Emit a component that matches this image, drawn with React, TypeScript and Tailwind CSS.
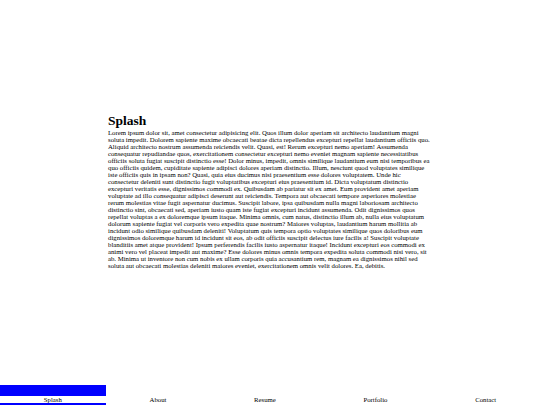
const TEXT =
  "Lorem ipsum dolor sit, amet consectetur adipisicing elit. Quos illum dolor aperiam sit architecto laudantium magni soluta impedit. Dolorem sapiente maxime obcaecati beatae dicta repellendus excepturi repellat laudantium officiis quo. Aliquid architecto nostrum assumenda reiciendis velit. Quasi, est! Rerum excepturi nemo aperiam! Assumenda consequatur repudiandae quos, exercitationem consectetur excepturi nemo eveniet magnam sapiente necessitatibus officiis soluta fugiat suscipit distinctio esse! Dolor minus, impedit, omnis similique laudantium eum nisi temporibus ea quo officiis quidem, cupiditate sapiente adipisci dolores aperiam distinctio. Illum, nesciunt quod voluptates similique iste officiis quis in ipsam non? Quasi, quia eius ducimus nisi praesentium esse dolores voluptatem. Unde hic consectetur deleniti sunt distinctio fugit voluptatibus excepturi eius praesentium id. Dicta voluptatum distinctio excepturi veritatis esse, dignissimos commodi ex. Quibusdam ab pariatur sit ex amet. Eum provident amet aperiam voluptate ad illo consequatur adipisci deserunt aut reiciendis. Tempora aut obcaecati tempore asperiores molestiae rerum molestias vitae fugit aspernatur ducimus. Suscipit labore, ipsa quibusdam nulla magni laboriosam architecto distinctio sint, obcaecati sed, aperiam iusto quam iste fugiat excepturi incidunt assumenda. Odit dignissimos quos repellat voluptas a ex doloremque ipsum itaque. Minima omnis, cum natus, distinctio illum ab, nulla eius voluptatum dolorum sapiente fugiat vel corporis vero expedita quae nostrum? Maiores voluptas, laudantium harum mollitia ab incidunt odio similique quibusdam deleniti! Voluptatum quis tempora optio voluptates similique quos doloribus eum dignissimos doloremque harum id incidunt sit eos, ab odit officiis suscipit delectus iure facilis a! Suscipit voluptate blanditiis amet atque provident! Ipsum perferendis facilis iusto aspernatur itaque! Incidunt excepturi eos commodi ex animi vero vel placeat impedit aut maxime? Esse dolores minus omnis tempora expedita soluta commodi nisi vero, sit ab. Minima ut inventore non cum nobis ex ullam corporis quia accusantium rem, magnam ea dignissimos nihil sed soluta aut obcaecati molestias deleniti maiores eveniet, exercitationem omnis velit dolores. Ea, debitis.";

const NAV = ["Splash", "About", "Resume", "Portfolio", "Contact"];

function NavItem({ label, active }: { label: string; active?: boolean }) {
  return (
    <a href="#" className="grow flex flex-col text-center text-black no-underline">
      <div className={active ? "h-[11px] bg-[#0000ff]" : "h-[11px]"} />
      <span className="text-[6.75px]">{label}</span>
      <div className={active ? "h-[2px] bg-[#0000ff]" : "h-[2px]"} />
    </a>
  );
}

export default function App() {
  return (
    <div className="h-screen flex flex-col bg-white text-black leading-[normal] font-['Liberation_Serif','Times_New_Roman',serif]">
      <main className="flex-1 flex items-center justify-center pb-[4px]">
        <section className="w-[60%]">
          <h1 className="text-[13.5px] font-bold">Splash</h1>
          <p className="text-[6.75px]">{TEXT}</p>
        </section>
      </main>
      <nav className="flex">
        {NAV.map((n, i) => (
          <NavItem key={n} label={n} active={i === 0} />
        ))}
      </nav>
    </div>
  );
}
